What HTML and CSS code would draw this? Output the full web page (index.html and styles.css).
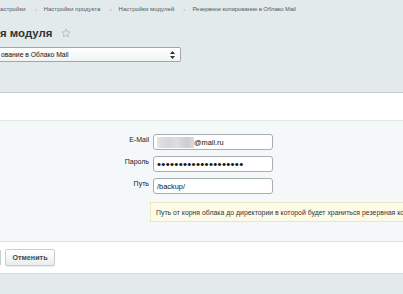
FILE: index.html
```html
<!DOCTYPE html>
<html lang="ru">
<head>
<meta charset="utf-8">
<link rel="stylesheet" href="styles.css">
</head>
<body>
<div class="top">
  <div class="crumbs">
    <span>астройки</span><span class="sep">›</span>
    <span>Настройки продукта</span><span class="sep">›</span>
    <span>Настройки модулей</span><span class="sep">›</span>
    <span class="last">Резервное копирование в Облако Mail</span>
  </div>
  <div class="title">
    <h1>я модуля</h1>
    <svg class="star" width="10" height="10" viewBox="0 0 24 24"><path d="M12 2.5l2.9 6.4 7 .7-5.2 4.7 1.5 6.9L12 17.6l-6.2 3.6 1.5-6.9L2.1 9.6l7-.7z" fill="none" stroke="#b3bcc2" stroke-width="2" stroke-linejoin="round"/></svg>
  </div>
  <div class="select">
    <span>ование в Облако Mail</span>
    <svg width="5" height="8" viewBox="0 0 5 8"><path d="M2.5 0L5 3H0z M2.5 8L0 5h5z" fill="#333"/></svg>
  </div>
</div>
<div class="band"></div>
<div class="panel">
  <div class="form">
    <label>E-Mail</label>
    <div class="input"><span class="blur"></span><span>@mail.ru</span></div>
    <label>Пароль</label>
    <div class="input"><span class="dots">••••••••••••••••••••</span></div>
    <label>Путь</label>
    <div class="input"><span>/backup/</span></div>
  </div>
  <div class="hint">Путь от корня облака до директории в которой будет храниться резервная копия</div>
</div>
<div class="buttons">
  <button class="btn save" aria-label="Сохранить"></button>
  <button class="btn">Отменить</button>
</div>
<div class="bottom"></div>
</body>
</html>
```

FILE: styles.css
```css
html, body {
  margin: 0;
  padding: 0;
}
body {
  background: #e3eaec;
  font-family: "Liberation Sans", Arial, sans-serif;
  color: #333;
  width: 403px;
  height: 294px;
  overflow: hidden;
}
.top {
  height: 93px;
  box-sizing: border-box;
  padding-top: 4px;
  border-bottom: 1px solid #c3ccd0;
}
.crumbs {
  font-size: 6.1px;
  color: #535c69;
  line-height: 9px;
  white-space: nowrap;
  display: flex;
}
.crumbs .sep {
  color: #a5aeb4;
  margin: 0 7px 0 9px;
}
.crumbs .last {
  letter-spacing: -0.15px;
}
.title {
  display: flex;
  align-items: center;
  margin-top: 13px;
  height: 14px;
}
.title h1 {
  margin: 0;
  font-size: 11.4px;
  font-weight: bold;
  color: #2f3233;
  line-height: 14px;
}
.star {
  margin-left: 9px;
  margin-top: -1px;
}
.select {
  margin-top: 7px;
  width: 181px;
  height: 15px;
  box-sizing: border-box;
  border: 1px solid #9fa7ab;
  border-left: none;
  border-radius: 0 2px 2px 0;
  background: linear-gradient(#ffffff, #f1f3f4);
  display: flex;
  align-items: center;
  justify-content: space-between;
  padding: 0 5px 0 1px;
  font-size: 6.8px;
  color: #111;
}
.band {
  height: 27px;
  background: #fff;
  border-bottom: 1px solid #e0e6e8;
}
.panel {
  height: 121px;
  box-sizing: border-box;
  background: #f5f8f9;
  border-bottom: 1px solid #d9e4e8;
  padding-top: 13px;
}
.form {
  display: grid;
  grid-template-columns: 149px 120px;
  column-gap: 4px;
  row-gap: 6px;
  align-items: center;
}
.form label {
  text-align: right;
  font-size: 7px;
  color: #222;
  align-self: start;
  padding-top: 2px;
}
.input {
  height: 16px;
  box-sizing: border-box;
  border: 1px solid #a7aeb1;
  border-radius: 3px;
  background: #fff;
  display: flex;
  align-items: center;
  padding-left: 3px;
  font-size: 7.4px;
  color: #111;
}
.blur {
  width: 37px;
  height: 11px;
  background: linear-gradient(90deg, #e4e4e4 0, #d6d6d6 30%, #dedede 55%, #cccccc 80%, #dcdcdc 100%);
  filter: blur(0.6px);
}
.dots {
  font-size: 11.5px;
  letter-spacing: 0.3px;
  line-height: 10px;
  color: #111;
}
.hint {
  margin: 8px 0 0 150px;
  height: 20px;
  box-sizing: border-box;
  background: #fdfbe8;
  border: 1px solid #ebe6c3;
  border-right: none;
  display: flex;
  align-items: center;
  padding-left: 5px;
  font-size: 6.9px;
  color: #333;
  white-space: nowrap;
  overflow: hidden;
}
.buttons {
  height: 32px;
  box-sizing: border-box;
  background: #fff;
  border-bottom: 1px solid #d3dbde;
  display: flex;
  align-items: flex-start;
  gap: 4px;
  padding-top: 7px;
}
.btn {
  height: 17px;
  box-sizing: border-box;
  border: 1px solid #c9cfd1;
  border-radius: 2px;
  background: linear-gradient(#ffffff, #e9edee);
  box-shadow: 0 1px 1px rgba(0,0,0,0.08);
  font-family: "Liberation Sans", Arial, sans-serif;
  font-size: 7.2px;
  font-weight: bold;
  color: #434749;
  padding: 0 6px;
  width: 50px;
}
.save {
  margin-left: -59px;
  width: 60px;
}
.bottom {
  height: 30px;
}
```
